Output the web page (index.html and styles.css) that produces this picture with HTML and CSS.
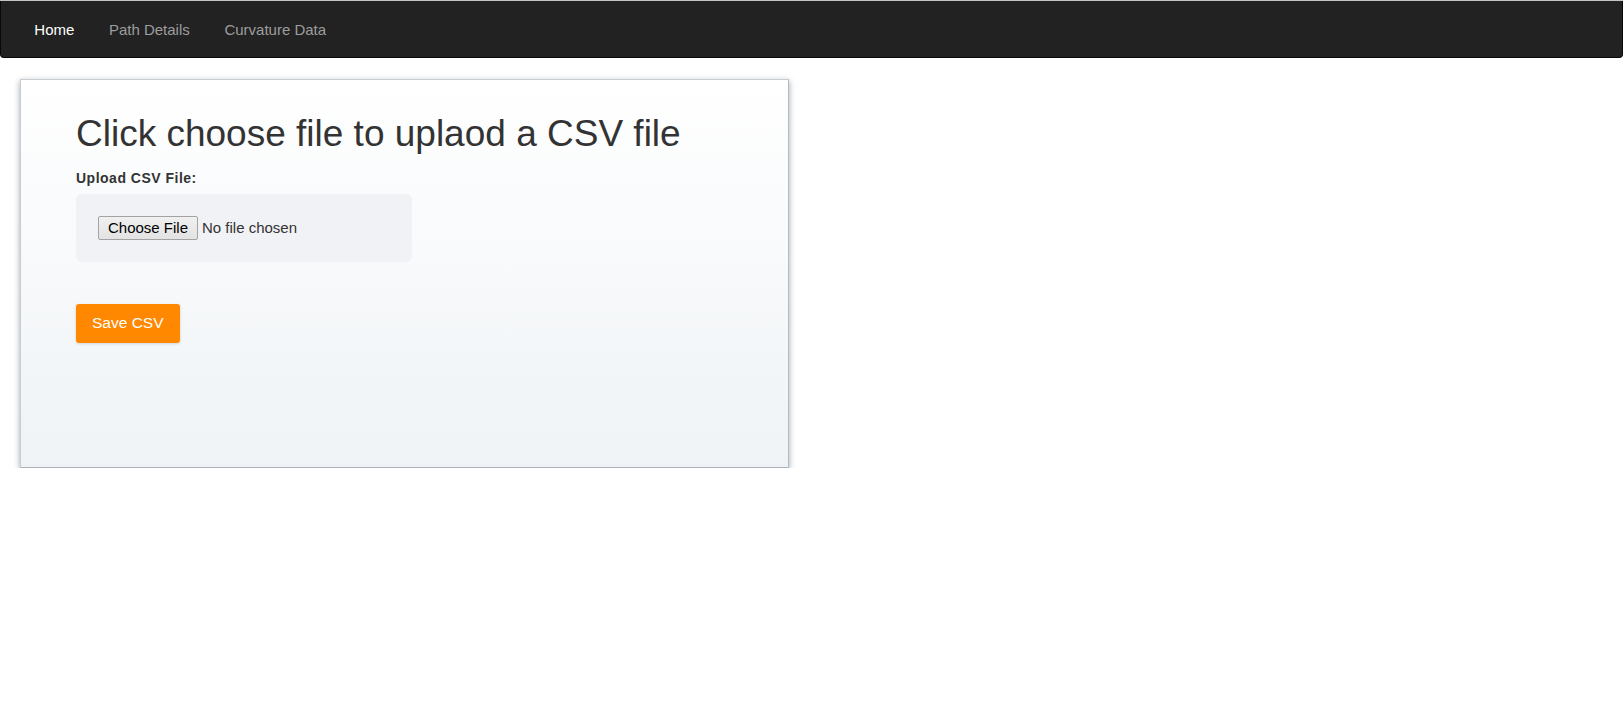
FILE: index.html
```html
<!DOCTYPE html>
<html lang="en">
<head>
<meta charset="utf-8">
<title>Upload CSV</title>
<link rel="stylesheet" href="styles.css">
</head>
<body>
<nav class="navbar">
  <ul class="nav">
    <li><a class="nav-link active" href="#">Home</a></li>
    <li><a class="nav-link" href="#">Path Details</a></li>
    <li><a class="nav-link" href="#">Curvature Data</a></li>
  </ul>
</nav>
<main class="page">
  <section class="card">
    <h1 class="title">Click choose file to uplaod a CSV file</h1>
    <label class="field-label">Upload CSV File:</label>
    <div class="file-box">
      <label class="file-btn">Choose File<input class="file-input" type="file" accept=".csv"></label>
      <span class="file-status">No file chosen</span>
    </div>
    <button class="save-btn" type="button">Save CSV</button>
  </section>
</main>
</body>
</html>
```
FILE: styles.css
```css
html, body {
  margin: 0;
  padding: 0;
  background: #ffffff;
}

body {
  font-family: "Liberation Sans", Arial, sans-serif;
  color: #333333;
  border-top: 1px solid #c4c4c4;
}

.navbar {
  background: #222222;
  border: 1px solid #080808;
  border-top: none;
  border-radius: 0 0 4px 4px;
  height: 57px;
  box-sizing: border-box;
}

.nav {
  list-style: none;
  margin: 0;
  padding: 0 0 0 16px;
  display: flex;
}

.nav-link {
  display: block;
  padding: 19px 17.3px 17px;
  font-size: 15px;
  line-height: 20px;
  color: #9d9d9d;
  text-decoration: none;
}

.nav-link.active {
  color: #ffffff;
}

.page {
  padding: 21px 0 0 20px;
}

.card {
  width: 769px;
  box-sizing: border-box;
  border: 1px solid #c9cdd2;
  border-right-color: #b4bcc4;
  border-bottom-color: #a9b2ba;
  background: linear-gradient(to bottom, #ffffff 0%, #eff3f6 100%);
  box-shadow: 0 2px 6px rgba(40, 55, 70, 0.45);
  padding: 34px 20px 124px 55px;
}

.title {
  margin: 0 0 13px;
  font-size: 37px;
  font-weight: normal;
  line-height: 1.1;
  color: #333333;
}

.field-label {
  display: block;
  font-size: 14px;
  font-weight: bold;
  line-height: 20px;
  letter-spacing: 0.5px;
  margin-bottom: 6px;
}

.file-box {
  width: 336px;
  height: 68px;
  box-sizing: border-box;
  background: #f1f2f6;
  border-radius: 6px;
  padding: 22px;
  display: flex;
  align-items: center;
}

.file-btn {
  width: 100px;
  height: 24px;
  box-sizing: border-box;
  border: 1px solid #a3a3a3;
  border-radius: 2px;
  background: linear-gradient(to bottom, #f0f0f0, #e3e3e3);
  color: #000000;
  font-size: 15px;
  line-height: 22px;
  text-align: center;
  cursor: default;
}

.file-input {
  display: none;
}

.file-status {
  margin-left: 4px;
  font-size: 15px;
  line-height: 22px;
  color: #333333;
}

.save-btn {
  display: block;
  margin-top: 42px;
  height: 39px;
  padding: 0 16px;
  border: none;
  border-radius: 3px;
  background: #ff8800;
  color: #ffffff;
  font-family: "Liberation Sans", Arial, sans-serif;
  font-size: 15.5px;
  box-shadow: 0 1px 3px rgba(0, 0, 0, 0.15);
}
```
